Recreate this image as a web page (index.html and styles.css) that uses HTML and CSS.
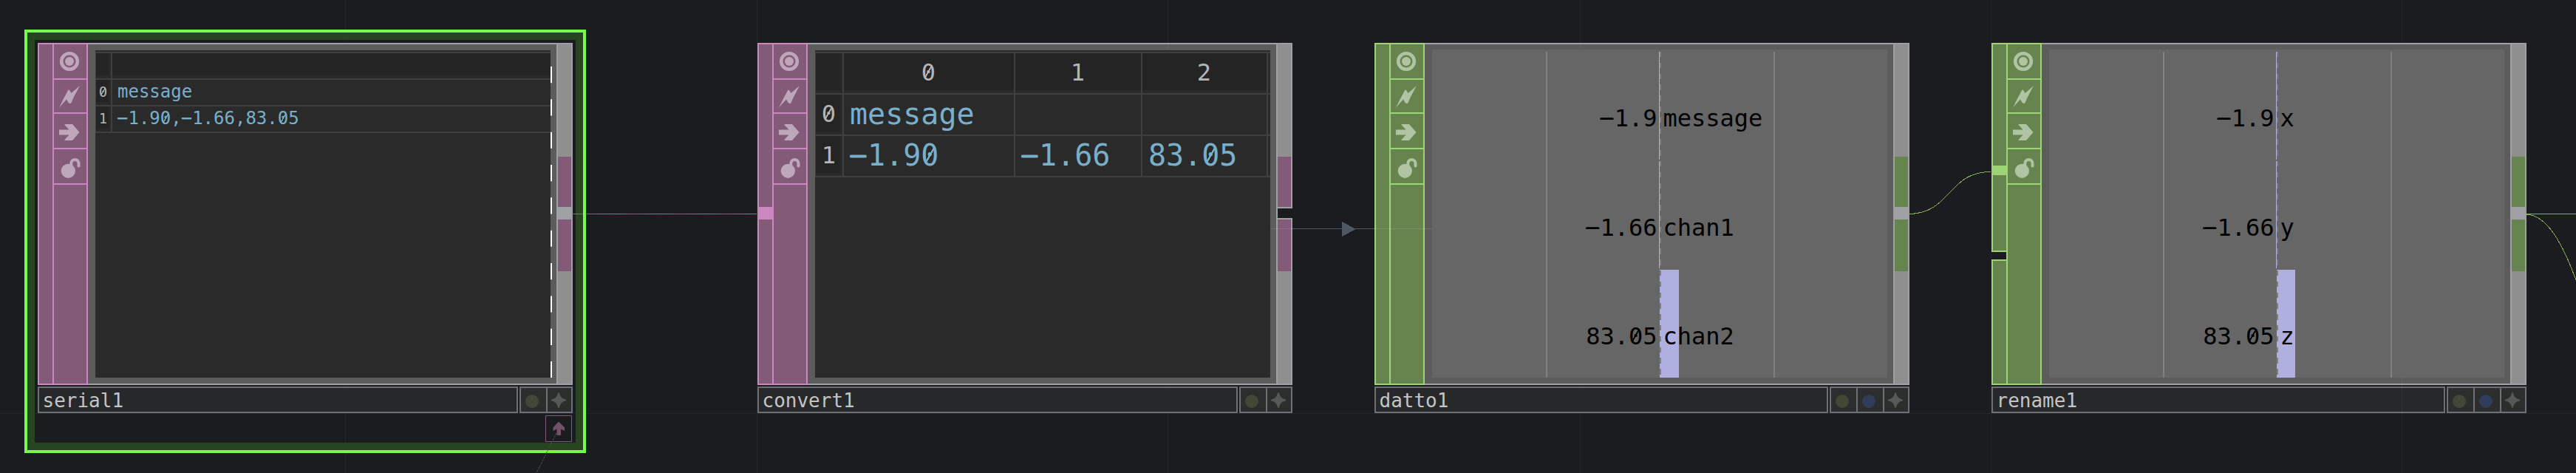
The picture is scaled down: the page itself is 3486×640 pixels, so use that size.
FILE: index.html
```html
<!DOCTYPE html>
<html lang="en">
<head>
<meta charset="utf-8">
<title>Network editor</title>
<link rel="stylesheet" href="styles.css">
</head>
<body>
<svg class="defs" width="0" height="0" aria-hidden="true">
  <symbol id="i-view" viewBox="0 0 44 44"><circle cx="21" cy="22" r="10.800" fill="none" stroke="currentColor" stroke-width="4.600"/><circle cx="21" cy="22" r="6" fill="currentColor"/></symbol>
  <symbol id="i-bolt" viewBox="0 0 44 44"><path d="M35 8 L27 23 L23 32 L20 31.5 L17 26.5 L7 37.5 L12 27.5 L19.5 13.5 L21 14 L23.5 18 Z" fill="currentColor"/></symbol>
  <symbol id="i-arrow" viewBox="0 0 44 44"><path d="M7 20.500H20.500L14 13.500L16 13H25L34.500 24L25 35H16L14 34.500L20.500 27.500H7Z" fill="currentColor"/></symbol>
  <symbol id="i-lock" viewBox="0 0 44 44"><circle cx="19.300" cy="28.300" r="9.600" fill="currentColor"/><path d="M23.300 21V18a5 5 0 0 1 10.200 0V21.500" fill="none" stroke="currentColor" stroke-width="4" stroke-linecap="round"/></symbol>
  <symbol id="i-star" viewBox="0 0 32 32"><path d="M15 6.500Q16.500 15 25 16.500Q16.500 18 15 26.500Q13.500 18 5 16.500Q13.500 15 15 6.500Z" fill="currentColor" stroke="currentColor" stroke-width="1.600"/></symbol>
</svg>

<main class="canvas">
  <svg class="layer" width="3486" height="640" viewBox="0 0 3486 640">
    <g class="grid-lines">
      <path d="M467.500 0V640M1024.500 0V640M1580.500 0V640M2138.500 0V640M2694.500 0V640M3250.500 0V640M0 559.500H3486"/>
    </g>
  </svg>

  <div class="selection"></div>

  <section class="node dat serial">
    <div class="main">
      <div class="inputs"><div class="seg"></div></div>
      <div class="flags">
        <svg class="f1"><use href="#i-view"/></svg><svg class="f2"><use href="#i-bolt"/></svg><svg class="f3"><use href="#i-arrow"/></svg><svg class="f4"><use href="#i-lock"/></svg>
      </div>
      <div class="viewer">
        <div class="sheet small">
          <div class="row head"><span class="idx"></span><span class="cell"></span></div>
          <div class="row"><span class="idx"><b class="z">0</b></span><span class="cell">message</span></div>
          <div class="row"><span class="idx">1</span><span class="cell"><b class="m">−</b>1.9<b class="z">0</b>,<b class="m">−</b>1.66,83.<b class="z">0</b>5</span></div>
          <svg class="edge" width="2" height="443"><path d="M1 22V443"/></svg>
        </div>
      </div>
      <div class="outputs"><div class="seg"><i class="pad"></i><i class="port upper"></i><i class="link"></i><i class="port lower"></i></div></div>
    </div>
    <div class="footer"><div class="name">serial1</div><div class="tools"><span class="dot green"></span><span class="star"><svg><use href="#i-star"/></svg></span></div></div>
    <div class="dock"><svg width="34" height="34"><path d="M17 7.500L25 15.500V20L20 17.500V26H14.500V17.500L9.500 20V15.500Z"/></svg></div>
  </section>

  <section class="node dat convert">
    <div class="main">
      <div class="inputs"><div class="seg"><i class="link mid"></i></div></div>
      <div class="flags">
        <svg class="f1"><use href="#i-view"/></svg><svg class="f2"><use href="#i-bolt"/></svg><svg class="f3"><use href="#i-arrow"/></svg><svg class="f4"><use href="#i-lock"/></svg>
      </div>
      <div class="viewer">
        <div class="sheet large">
          <div class="row head"><span class="idx"></span><span class="cell"><b class="z">0</b></span><span class="cell">1</span><span class="cell">2</span></div>
          <div class="row"><span class="idx"><b class="z">0</b></span><span class="cell">message</span><span class="cell"></span><span class="cell"></span></div>
          <div class="row"><span class="idx">1</span><span class="cell"><b class="m">−</b>1.9<b class="z">0</b></span><span class="cell"><b class="m">−</b>1.66</span><span class="cell">83.<b class="z">0</b>5</span></div>
        </div>
      </div>
      <div class="outputs split"><div class="seg"><i class="pad"></i><i class="port upper"></i></div><div class="seg"><i class="port lower"></i></div></div>
    </div>
    <div class="footer"><div class="name">convert1</div><div class="tools"><span class="dot green"></span><span class="star"><svg><use href="#i-star"/></svg></span></div></div>
  </section>

  <section class="node chop datto">
    <div class="main">
      <div class="inputs"><div class="seg"></div></div>
      <div class="flags">
        <svg class="f1"><use href="#i-view"/></svg><svg class="f2"><use href="#i-bolt"/></svg><svg class="f3"><use href="#i-arrow"/></svg><svg class="f4"><use href="#i-lock"/></svg>
      </div>
      <div class="viewer">
        <div class="chart">
          <svg class="plot" width="616" height="444"><path class="tick" d="M155 3V444M463 3V444"/><path class="neg" d="M307.500 3V149M307.500 151V296"/><rect class="bar" x="308" y="298" width="26" height="146"/><path class="zero" d="M309 3V444"/></svg>
          <div class="chan"><span class="val"><b class="m">−</b>1.9</span><span class="label">message</span></div>
          <div class="chan"><span class="val"><b class="m">−</b>1.66</span><span class="label">chan1</span></div>
          <div class="chan"><span class="val">83.<b class="z">0</b>5</span><span class="label">chan2</span></div>
        </div>
      </div>
      <div class="outputs"><div class="seg"><i class="pad"></i><i class="port upper"></i><i class="link"></i><i class="port lower"></i></div></div>
    </div>
    <div class="footer"><div class="name">datto1</div><div class="tools"><span class="dot green"></span><span class="dot blue"></span><span class="star"><svg><use href="#i-star"/></svg></span></div></div>
  </section>

  <section class="node chop rename">
    <div class="main">
      <div class="inputs split"><div class="seg"><i class="link high"></i></div><div class="seg"></div></div>
      <div class="flags">
        <svg class="f1"><use href="#i-view"/></svg><svg class="f2"><use href="#i-bolt"/></svg><svg class="f3"><use href="#i-arrow"/></svg><svg class="f4"><use href="#i-lock"/></svg>
      </div>
      <div class="viewer">
        <div class="chart">
          <svg class="plot" width="616" height="444"><path class="tick" d="M155 3V444M463 3V444"/><path class="neg" d="M307.500 3V149M307.500 151V296"/><rect class="bar" x="308" y="298" width="25" height="146"/><path class="zero" d="M309 3V444"/></svg>
          <div class="chan"><span class="val"><b class="m">−</b>1.9</span><span class="label">x</span></div>
          <div class="chan"><span class="val"><b class="m">−</b>1.66</span><span class="label">y</span></div>
          <div class="chan"><span class="val">83.<b class="z">0</b>5</span><span class="label">z</span></div>
        </div>
      </div>
      <div class="outputs"><div class="seg"><i class="pad"></i><i class="port upper"></i><i class="link"></i><i class="port lower"></i></div></div>
    </div>
    <div class="footer"><div class="name">rename1</div><div class="tools"><span class="dot green"></span><span class="dot blue"></span><span class="star"><svg><use href="#i-star"/></svg></span></div></div>
  </section>

  <svg class="layer" width="3486" height="640" viewBox="0 0 3486 640" fill="none" shape-rendering="crispEdges">
    <defs>
      <linearGradient id="pulse" gradientUnits="userSpaceOnUse" x1="793" x2="856" y1="0" y2="0" spreadMethod="repeat">
        <stop offset="0" stop-color="#85587b"/><stop offset="0.600" stop-color="#b0679b"/><stop offset="1" stop-color="#85587b"/>
      </linearGradient>
    </defs>
    <rect x="774" y="289" width="15" height="1" fill="#7d7568"/>
    <rect x="793" y="289" width="231" height="1" fill="url(#pulse)"/>
    <path d="M1749 309.500H1860" stroke="#4e5864"/>
    <path d="M1719 309.500H1749M1860 309.500H1938" stroke="#c8dcd0" stroke-opacity="0.150"/>
    <path d="M1816 300L1835 310L1816 320Z" fill="#4e5864"/>
    <path d="M2582 289.500C2641 289.500 2635 232.500 2694 232.500" stroke="#86ae57"/>
    <path d="M3418 289.500H3486" stroke="#86ae57"/>
    <path d="M3418 290C3448 290 3470 335 3486 379" stroke="#86ae57"/>
    <path d="M753 586L726 640" stroke="#48494a" stroke-dasharray="3 1"/>
    <path d="M3250.500 511V559M1580.500 58V68M2138.500 58V67" stroke="#fff" stroke-opacity="0.060"/>
  </svg>
</main>
</body>
</html>
```

FILE: styles.css
```css
* { box-sizing: border-box; }
body { margin: 0; background: #1b1c20; }
.defs { position: absolute; }
.canvas {
  position: relative;
  width: 3486px;
  height: 640px;
  overflow: hidden;
  background: #1b1c20;
  font-family: "DejaVu Sans Mono", monospace;
}
.layer { position: absolute; left: 0; top: 0; pointer-events: none; }
.grid-lines { stroke: #25262a; fill: none; }

/* Selection frame round the current node */
.selection {
  position: absolute;
  left: 33px;
  top: 40px;
  width: 760px;
  height: 573px;
  border: 4px solid #78fc4c;
  box-shadow: inset 0 0 0 10px #264520;
}

/* Nodes */
.node { position: absolute; top: 58px; width: 724px; }
.serial { left: 51px; }
.convert { left: 1025px; }
.datto { left: 1860px; }
.rename { left: 2695px; }
.dat { --fill: #835b78; --line: #cc86c0; --icon: #bfa7bb; }
.chop { --fill: #66844d; --line: #9fd474; --icon: #b0c3a2; }
.main { display: flex; height: 463px; }

.inputs, .outputs { display: flex; flex-direction: column; }
.inputs { width: 20px; }
.inputs .seg { flex: 1; background: var(--fill); border: 2px solid var(--line); border-right: 0; }
.inputs.split { gap: 10px; }
.inputs.split .seg:first-child { flex: none; height: 283px; }
.link { display: block; height: 17px; background: #a0a1a5; }
.inputs .link { background: var(--line); }
.inputs .seg { display: flex; flex-direction: column; }
.link.mid { margin-top: 220px; }
.link.high { margin-top: 164px; height: 13px; }

.flags {
  width: 48px;
  display: flex;
  flex-direction: column;
  background: var(--fill);
  border: 2px solid var(--line);
  color: var(--icon);
}
.flags svg { display: block; width: 44px; height: 48px; border-bottom: 2px solid var(--line); flex: none; }
.flags .f2 { height: 46px; }

.viewer {
  width: 634px;
  padding: 8px 8px 8px 10px;
  background: #5c5c5c;
  border: solid #9fa1a4;
  border-width: 2px 0;
}
.chop .viewer { padding-top: 7px; }

.outputs { width: 22px; border-left: 2px solid #9fa0a4; }
.outputs .seg { flex: 1; background: #8f8f8f; border: 2px solid #9fa0a4; border-left: 0; }
.outputs.split { gap: 13px; }
.outputs.split .seg:first-child { flex: none; height: 224px; }
.pad { display: block; height: 152px; }
.port { display: block; background: var(--fill); }
.port.upper { height: 68px; }
.port.lower { height: 70px; }

/* Slashed zero and wide minus */
.z {
  font-weight: inherit;
  background: linear-gradient(to bottom right, transparent 43%, currentColor 45% 55%, transparent 57%) 0.160em 0.320em / 0.280em 0.490em no-repeat;
}
.m { font-weight: inherit; text-shadow: -0.045em 0 currentColor; }

/* Table viewers */
.sheet { position: relative; height: 443px; padding-top: 2px; background: #2a2a2a; color: #78b0cc; }
.row { display: grid; border-bottom: 2px solid #3f3f3f; white-space: pre; }
.row.head { border-top: 2px solid #3f3f3f; }
.idx { border-left: 1px solid #3f3f3f; color: #b5b5b5; text-align: center; background: #242424; border-right: 2px solid #3f3f3f; box-shadow: inset 0 -4px #2a2a2a, inset -3px 0 #2a2a2a; }
.cell { padding-left: 7px; }
.head .cell { background: #242424; box-shadow: inset 0 -4px #2a2a2a; text-align: center; color: #b5b5b5; padding-left: 0; }
.small .row { grid-template-columns: 23px 1fr; height: 36px; font-size: 24px; line-height: 32px; }
.small .head { height: 38px; }
.small .idx { font-size: 19px; line-height: 32px; padding-right: 1px; }
.large .row { grid-template-columns: 39px 232px 172px 170px; height: 56px; font-size: 40px; line-height: 52px; }
.large .head { height: 58px; }
.large .cell { border-right: 2px solid #3f3f3f; padding-left: 8px; }
.large .head .cell { font-size: 32px; line-height: 52px; padding: 0 1px 0 0; }
.large .idx { font-size: 32px; line-height: 52px; padding-right: 1px; }
.edge { position: absolute; right: -2px; top: 0; }
.edge path { stroke: #fff; stroke-width: 2; stroke-dasharray: 22.170 22.170; }

/* Channel viewers */
.chart { position: relative; height: 444px; padding-top: 3px; background: #666; color: #000; font-size: 32px; }
.plot { position: absolute; left: 0; top: 0; fill: none; shape-rendering: crispEdges; }
.tick { stroke: #808080; stroke-width: 2; }
.neg { stroke: #b0b0e0; }
.bar { fill: #b0b0e0; }
.zero { stroke: #808080; stroke-width: 2; stroke-dasharray: 7.400 7.400; }
.chan { position: relative; display: grid; grid-template-columns: 304.500px 1fr; column-gap: 8px; height: 147.500px; line-height: 180px; }
.val { text-align: right; }

/* Name bar */
.footer { display: flex; gap: 2px; height: 36px; margin-top: 2px; }
.name { flex: 1; padding-left: 4.500px; border: 2px solid #6f7074; background: #262829; color: #c4c4c4; font-size: 26px; line-height: 34px; }
.tools { display: flex; border: 2px solid #6f7074; background: #2b2e2d; }
.tools span { width: 36px; height: 32px; border-right: 2px solid #6f7074; display: flex; }
.tools .star { width: 32px; border: 0; color: #565958; }
.star svg { width: 32px; height: 32px; }
.dot::before { content: ""; width: 18px; height: 18px; margin: 9px 0 0 6px; border-radius: 50%; }
.green::before { background: #414936; }
.blue::before { background: #303d5a; }
.dock { width: 36px; height: 36px; margin: 3px 1px 0 auto; border: 1px solid #7f5a77; }
.dock svg { display: block; fill: #75506a; }
```
